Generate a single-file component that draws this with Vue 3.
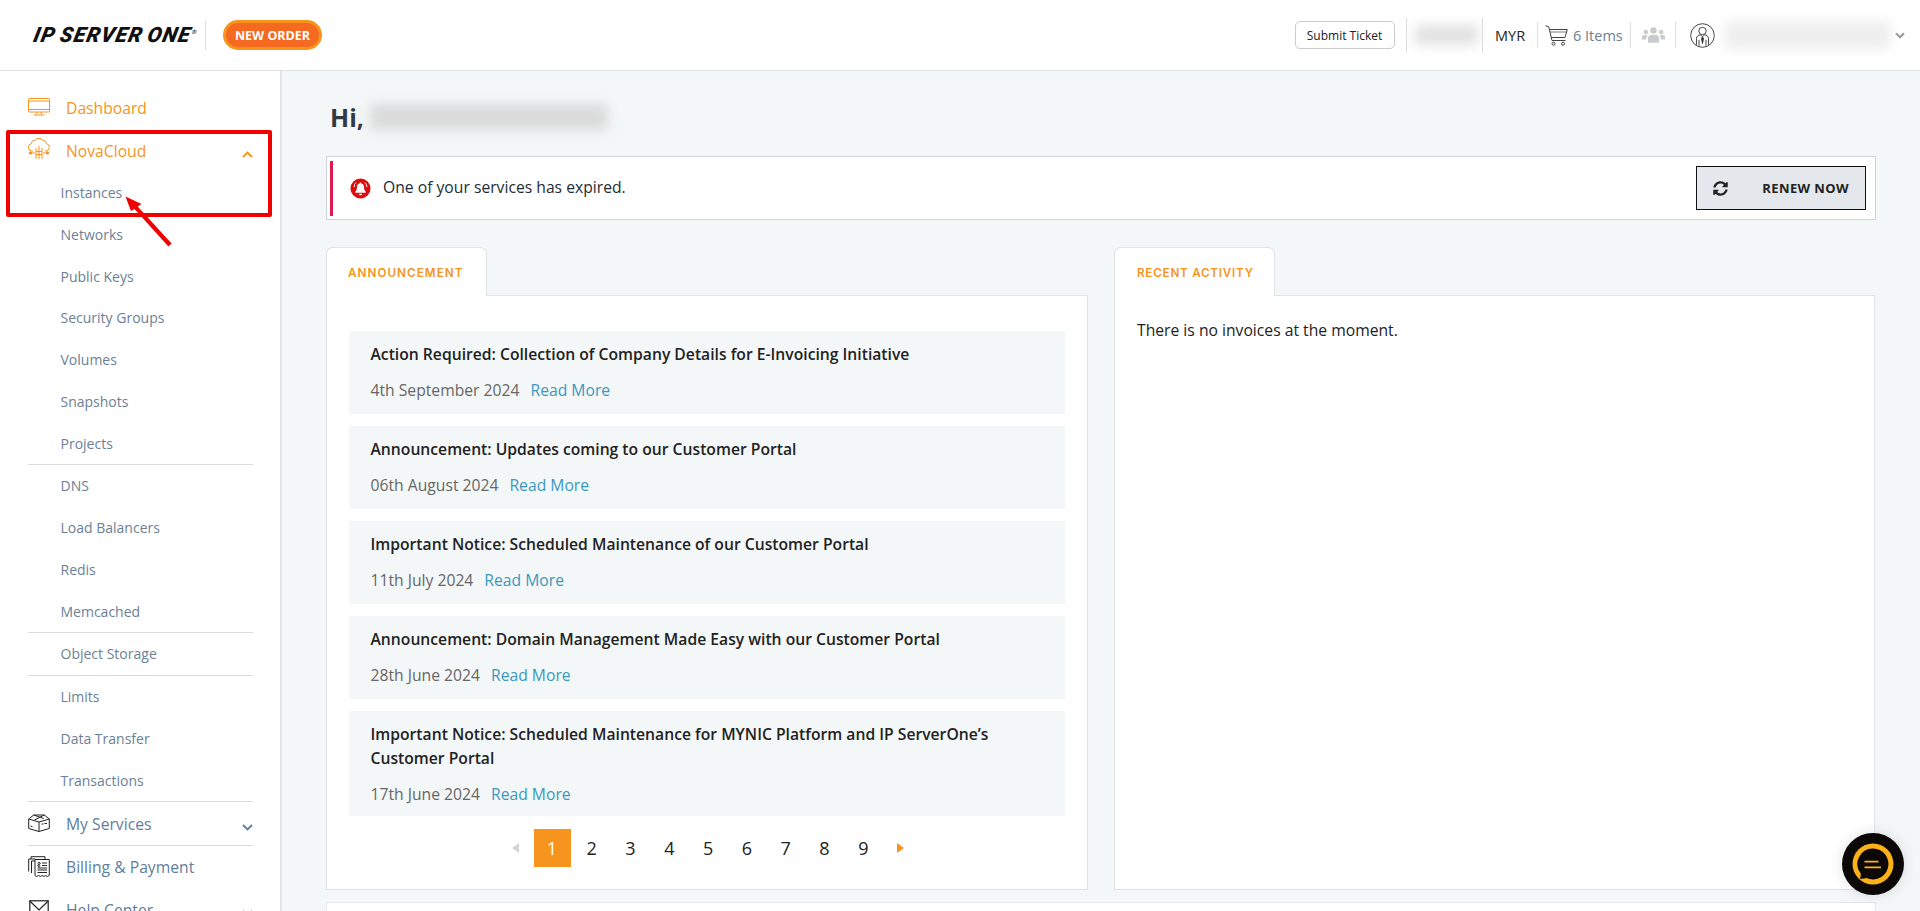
<script setup>
// Datos del menú lateral
const submenu = [
  { nombre: "Instances" },
  { nombre: "Networks" },
  { nombre: "Public Keys" },
  { nombre: "Security Groups" },
  { nombre: "Volumes" },
  { nombre: "Snapshots" },
  { nombre: "Projects" },
  { nombre: "DNS", linea: true },
  { nombre: "Load Balancers" },
  { nombre: "Redis" },
  { nombre: "Memcached" },
  { nombre: "Object Storage", linea: true },
  { nombre: "Limits", linea: true },
  { nombre: "Data Transfer" },
  { nombre: "Transactions" },
];

const anuncios = [
  { titulo: "Action Required: Collection of Company Details for E-Invoicing Initiative", fecha: "4th September 2024" },
  { titulo: "Announcement: Updates coming to our Customer Portal", fecha: "06th August 2024" },
  { titulo: "Important Notice: Scheduled Maintenance of our Customer Portal", fecha: "11th July 2024" },
  { titulo: "Announcement: Domain Management Made Easy with our Customer Portal", fecha: "28th June 2024" },
  { titulo: "Important Notice: Scheduled Maintenance for MYNIC Platform and IP ServerOne’s Customer Portal", fecha: "17th June 2024" },
];

const paginas = [1, 2, 3, 4, 5, 6, 7, 8, 9];
</script>

<template>
  <div class="app">
    <header class="topbar">
      <div class="logo">IP SERVER ONE<sup>®</sup></div>
      <span class="logo-sep"></span>
      <button class="new-order">NEW ORDER</button>

      <div class="top-right">
        <button class="ticket">Submit Ticket</button>
        <span class="sep tall s1"></span>
        <span class="blur blur-credit"></span>
        <span class="sep tall s2"></span>
        <span class="currency">MYR</span>
        <span class="sep s3"></span>
        <svg class="cart" viewBox="0 0 23 21" fill="none" stroke="#444" stroke-width="1">
          <path d="M.5 .8l3.200 .9L7 15.500h13.500" />
          <path d="M4.300 4.500h18l-2.300 8H6.200" />
          <path d="M5 7h16.800" stroke-width=".7" />
          <circle cx="8.500" cy="18.700" r="1.500" />
          <circle cx="18" cy="18.700" r="1.500" />
        </svg>
        <span class="items">6 Items</span>
        <span class="sep s4"></span>
        <svg class="users" viewBox="0 0 23 16" fill="#c9cccf">
          <circle cx="11.500" cy="3.400" r="3.200" />
          <circle cx="3.800" cy="5" r="2.300" />
          <circle cx="19.200" cy="5" r="2.300" />
          <path d="M6 15.800V11c0-2 1.800-3.200 5.500-3.200S17 9 17 11v4.800z" />
          <path d="M0 12.500v-2.700c0-1 1.200-1.800 3.600-1.800.7 0 1.300.1 1.700.2-.7.8-.9 1.800-.9 2.800v1.500z" />
          <path d="M23 12.500v-2.700c0-1-1.200-1.800-3.600-1.800-.7 0-1.300.1-1.700.2.700.8.900 1.800.9 2.800v1.500z" />
        </svg>
        <span class="sep s5"></span>
        <svg class="avatar" viewBox="0 0 25 25" fill="none" stroke="#333" stroke-width=".9">
          <circle cx="12.500" cy="12.500" r="11.800" />
          <circle cx="12.500" cy="8" r="3.700" />
          <path d="M6.500 21.800V15.500c0-2.300 1.800-3.400 4-3.700l2 2 2-2c2.200 .3 4 1.400 4 3.700v6.300" />
          <path d="M9 22.800v-6M16 22.800v-6" />
          <path d="M12.500 14l-1 1.500 1 5 1-5z" fill="#333" />
        </svg>
        <span class="blur blur-user"></span>
        <svg class="caret" viewBox="0 0 10 7" fill="none" stroke="#999" stroke-width="2.200">
          <path d="M1 1.200l4 4 4-4" />
        </svg>
      </div>
    </header>

    <div class="body">
      <aside class="sidebar">
        <a class="menu-item active first">
          <svg class="menu-icon" viewBox="0 0 22 18" fill="none" stroke="#f7941d" stroke-width="1">
            <rect x=".5" y=".5" width="21" height="13.500" rx=".8" />
            <path d="M.5 3h21M.5 11.500h21M9 14l-.5 2.500M13 14l.5 2.500M5.500 17h11" />
          </svg>
          <span>Dashboard</span>
        </a>
        <a class="menu-item active">
          <svg class="menu-icon cloud" viewBox="0 0 22 22" fill="none" stroke="#f7941d" stroke-width="1">
            <path d="M5 13H4a3.700 3.700 0 0 1-.8-7.300 4 4 0 0 1 4-3.600A4.800 4.800 0 0 1 14.800 2.300 3.800 3.800 0 0 1 18.500 5.700 3.700 3.700 0 0 1 18 13h-1" />
            <path d="M8 10v11M14 10v11M11 8v13M8 13.500h6M8 16.500h6" />
            <path d="M1.500 15H7M15 15h5.500" />
            <circle cx="2.500" cy="15" r="1.200" fill="#f7941d" />
            <circle cx="19.500" cy="15" r="1.200" fill="#f7941d" />
          </svg>
          <span>NovaCloud</span>
          <svg class="chevron" viewBox="0 0 11 7" fill="none" stroke="#f7941d" stroke-width="1.800">
            <path d="M1 6l4.500-4.500L10 6" />
          </svg>
        </a>

        <ul class="submenu">
          <li v-for="item in submenu" :key="item.nombre" :class="{ linea: item.linea }">
            {{ item.nombre }}
          </li>
        </ul>

        <a class="menu-item bordered">
          <svg class="menu-icon" viewBox="0 0 22 18" fill="none" stroke="#222" stroke-width="1">
            <path d="M.7 5l10.300 3 10.300-3v9.500L11 17.500.7 14.500z" />
            <path d="M.7 5l5-4h10.600l5 4M11 8v9.500M5.700 1l10 3.500M16.300 1L6.500 6" />
            <path d="M13.500 10h2M16.500 9.500h2.500M2.500 12l2 .7" />
          </svg>
          <span>My Services</span>
          <svg class="chevron" viewBox="0 0 11 7" fill="none" stroke="#5f7d9c" stroke-width="1.800">
            <path d="M1 1l4.500 4.500L10 1" />
          </svg>
        </a>
        <a class="menu-item bordered">
          <svg class="menu-icon tall" viewBox="0 0 22 21" fill="none" stroke="#222" stroke-width="1">
            <path d="M3 3V.7h14V3M.7 15.500V3H7" />
            <path d="M3.500 17V5H7" />
            <path d="M7 3.500h14.300v16l-1.800 1-1.800-1-1.800 1-1.800-1-1.800 1-1.800-1L8.700 20.500 7 19.500z" />
            <path d="M14 7h5M14 9.500h5M9.500 12h9.500M9.500 14h9.500M9.500 16.500h9.500" />
            <path d="M11 6v5.500M9.500 7c.5-.8 3-.8 3 .4s-3 .8-3 2 2.500 1.200 3 .4" stroke-width=".8" />
          </svg>
          <span>Billing &amp; Payment</span>
        </a>
        <a class="menu-item">
          <svg class="menu-icon" viewBox="0 0 22 18" fill="none" stroke="#222" stroke-width="1.200">
            <rect x="1.800" y=".8" width="18.400" height="16.400" />
            <path d="M1.800 1l9.200 9 9.200-9" />
          </svg>
          <span>Help Center</span>
          <svg class="chevron" viewBox="0 0 11 7" fill="none" stroke="#5f7d9c" stroke-width="1.800">
            <path d="M1 1l4.500 4.500L10 1" />
          </svg>
        </a>

        <!-- Marca roja de la captura -->
        <div class="highlight"></div>
        <svg class="arrow" viewBox="0 0 50 53" fill="#f00000">
          <path d="M.5 .5l16 7.500-3.800 2.500 33.900 37-3.200 3-33.900-37.500L6 15z" />
        </svg>
      </aside>

      <main class="main">
        <h1 class="hi">Hi, <span class="blur blur-name"></span></h1>

        <div class="alert">
          <span class="alert-mark"></span>
          <svg class="bell" viewBox="0 0 22 22">
            <circle cx="11" cy="11" r="10.500" fill="#dd0b0b" />
            <path fill="#fff" d="M11 4.800a1 1 0 0 1 1 1c1.800 .5 2.700 2 2.700 4 0 2.500.8 3.700 1.800 4.700v1h-11v-1c1-1 1.800-2.200 1.800-4.700 0-2 .9-3.500 2.700-4a1 1 0 0 1 1-1zM9.300 16.500h3.400a1.700 1.700 0 0 1-3.400 0z" />
            <path fill="none" stroke="#fff" stroke-width="1" d="M6.300 4.800A6.500 6.500 0 0 0 4.300 9.500M15.700 4.800a6.500 6.500 0 0 1 2 4.700" />
          </svg>
          <span class="alert-text">One of your services has expired.</span>
          <button class="renew">
            <svg class="renew-icon" viewBox="0 0 512 512" fill="#222">
              <path d="M370.72 133.28C339.458 104.008 298.888 87.962 255.848 88c-77.458.068-144.328 53.178-162.791 126.85-1.344 5.363-6.122 9.15-11.651 9.15H24.103c-7.498 0-13.194-6.807-11.807-14.176C33.933 94.924 134.813 8 256 8c66.448 0 126.791 26.136 171.315 68.685L463.03 40.97C478.149 25.851 504 36.559 504 57.941V192c0 13.255-10.745 24-24 24H345.941c-21.382 0-32.09-25.851-16.971-40.971l41.75-41.749zM32 296h134.059c21.382 0 32.09 25.851 16.971 40.971l-41.75 41.75c31.262 29.273 71.835 45.319 114.876 45.28 77.418-.07 144.315-53.144 162.787-126.849 1.344-5.363 6.122-9.15 11.651-9.15h57.304c7.498 0 13.194 6.807 11.807 14.176C478.067 417.076 377.187 504 256 504c-66.448 0-126.791-26.136-171.315-68.685L48.97 471.03C33.851 486.149 8 475.441 8 454.059V320c0-13.255 10.745-24 24-24z" />
            </svg>
            <span>RENEW NOW</span>
          </button>
        </div>

        <div class="columns">
          <section class="column">
            <div class="tab">ANNOUNCEMENT</div>
            <div class="panel panel-left">
              <article v-for="a in anuncios" :key="a.titulo" class="anuncio">
                <h3>{{ a.titulo }}</h3>
                <p><span class="fecha">{{ a.fecha }}</span><a class="leer">Read More</a></p>
              </article>
              <nav class="pager">
                <i class="tri prev"></i>
                <span v-for="p in paginas" :key="p" :class="['page', { current: p === 1 }]">{{ p }}</span>
                <i class="tri next"></i>
              </nav>
            </div>
          </section>

          <section class="column">
            <div class="tab recent">RECENT ACTIVITY</div>
            <div class="panel panel-right">There is no invoices at the moment.</div>
          </section>
        </div>

        <div class="next-card"></div>
      </main>
    </div>

    <button class="chat" aria-label="Chat">
      <svg viewBox="0 0 42 42">
        <circle cx="21" cy="21" r="20.500" fill="#fbb117" />
        <path fill="#0b0807" d="M21 5.500a15.500 15.500 0 1 1-6.500 29.600c-2 .6-4.500 .9-7 .5 1-1 1.400-2.800 1.200-5A15.500 15.500 0 0 1 21 5.500z" />
        <path d="M12.500 18.700h14M12.500 24.300H29" stroke="#fbb117" stroke-width="1.800" fill="none" />
      </svg>
    </button>
  </div>
</template>

<style>
html, body {
  margin: 0;
  height: 100%;
  overflow: hidden;
}
</style>

<style scoped>
/* ===== Base ===== */
.app {
  position: relative;
  height: 911px;
  display: flex;
  flex-direction: column;
  overflow: hidden;
  font-family: "Open Sans", "Liberation Sans", sans-serif;
  color: #222;
  background: #f4f7f8;
}

/* ===== Barra superior ===== */
.topbar {
  flex: none;
  height: 70px;
  display: flex;
  align-items: center;
  padding: 0 15px 0 32px;
  background: #fff;
  border-bottom: 1px solid #dcdfe3;
}
.logo {
  width: 161px;
  margin-left: 2px;
  font-family: Roboto, "Liberation Sans", sans-serif;
  font-size: 21px;
  font-weight: 900;
  font-style: italic;
  letter-spacing: 1.250px;
  word-spacing: -2px;
  white-space: nowrap;
  color: #111;
  transform: skewX(-12deg);
}
.logo sup {
  font-size: 6px;
  vertical-align: 8px;
  line-height: 0;
}
.logo-sep {
  width: 1px;
  height: 29px;
  margin-left: 10px;
  background: #ddd;
}
.new-order {
  width: 99px;
  height: 30px;
  margin-left: 17px;
  padding: 0;
  border: 3px solid #f7941d;
  border-radius: 15px;
  background: #f56a20;
  color: #fff;
  font: 700 12.500px "Open Sans", sans-serif;
}
.top-right {
  margin-left: auto;
  display: flex;
  align-items: center;
}
.ticket {
  width: 100px;
  height: 28px;
  padding: 0;
  border: 1px solid #ccc;
  border-radius: 5px;
  background: #fff;
  color: #222;
  font: 400 12px "Open Sans", sans-serif;
}
.sep {
  flex: none;
  width: 1px;
  height: 26px;
  background: #ddd;
}
.sep.tall {
  height: 35px;
}
.s1 { margin-left: 11px; }
.s2 { margin-left: 3px; }
.s3 { margin-left: 11px; }
.s4 { margin-left: 7px; }
.s5 { margin-left: 10px; }
.blur {
  display: inline-block;
  background: #ddd;
  filter: blur(6px);
}
.blur-credit {
  width: 63px;
  height: 20px;
  margin-left: 8px;
  margin-right: 1.500px;
  background: #e2e2e2;
}
.currency {
  width: 31px;
  margin-left: 12px;
  font-size: 14.500px;
  color: #222;
}
.cart {
  width: 23px;
  height: 21px;
  margin-left: 7px;
}
.items {
  width: 50px;
  margin-left: 5px;
  font-size: 14.500px;
  white-space: nowrap;
  color: #6d7f90;
}
.users {
  width: 23px;
  height: 16px;
  margin-left: 11px;
}
.avatar {
  width: 25px;
  height: 25px;
  margin-left: 14px;
}
.blur-user {
  width: 165px;
  height: 28px;
  margin: 0 5px 0 10px;
  background: #eee;
}
.caret {
  width: 10px;
  height: 7px;
}

/* ===== Columna lateral ===== */
.body {
  flex: 1;
  display: flex;
  min-height: 0;
}
.sidebar {
  flex: none;
  position: relative;
  width: 282px;
  padding: 15px 27px 0 28px;
  box-sizing: border-box;
  background: #fff;
  border-right: 2px solid #e3e6e9;
}
.menu-item {
  display: flex;
  align-items: center;
  height: 43px;
  font-size: 15.700px;
  color: #5f7d9c;
}
.menu-item.active {
  color: #f7941d;
}
.menu-item.bordered {
  height: 42.500px;
  border-top: 1px solid #dcdcdc;
}
.menu-icon {
  flex: none;
  width: 22px;
  height: 18px;
  margin-top: -2px;
  margin-right: 16px;
}
.menu-icon.tall {
  height: 21px;
}
.menu-icon.cloud {
  height: 22px;
  margin-top: -3px;
}
.chevron {
  width: 11px;
  height: 7px;
  margin-left: auto;
  margin-top: 8px;
}
.submenu {
  list-style: none;
  margin: 0;
  padding: 0;
}
.submenu li {
  height: 41.750px;
  line-height: 41.750px;
  padding-left: 32.500px;
  font-size: 14px;
  color: #6c7f96;
}
.submenu li.linea {
  border-top: 1px solid #dcdcdc;
}

/* Recuadro y flecha rojos */
.highlight {
  position: absolute;
  left: 6px;
  top: 59px;
  width: 258px;
  height: 79px;
  border: 4px solid #f00000;
  border-radius: 2px;
}
.arrow {
  position: absolute;
  left: 125px;
  top: 125px;
  width: 50px;
  height: 53px;
}

/* ===== Contenido ===== */
.main {
  flex: 1;
  min-width: 0;
  padding: 29px 44px 0 44px;
}
.hi {
  display: flex;
  align-items: center;
  gap: 6px;
  height: 34px;
  margin: 0 0 22px 4px;
  font-size: 25px;
  font-weight: 700;
  color: #2f3a44;
}
.blur-name {
  width: 238px;
  height: 26px;
  background: #dadada;
}
.alert {
  height: 64px;
  box-sizing: border-box;
  display: flex;
  align-items: center;
  padding: 0 9px 0 3px;
  background: #fff;
  border: 1px solid #d0d3d6;
}
.alert-mark {
  width: 3px;
  height: 55px;
  background: #dc1a4e;
}
.bell {
  width: 21px;
  height: 21px;
  margin-left: 17px;
}
.alert-text {
  margin-left: 12px;
  margin-top: -2px;
  font-size: 15.700px;
  color: #222c36;
}
.renew {
  margin-left: auto;
  width: 170px;
  height: 44px;
  box-sizing: border-box;
  display: flex;
  align-items: center;
  justify-content: space-between;
  padding: 0 16px;
  background: #e4e7eb;
  border: 1px solid #111;
  font: 700 13px "Open Sans", sans-serif;
  letter-spacing: .4px;
  color: #222;
}
.renew-icon {
  width: 15px;
  height: 15px;
}
.columns {
  display: grid;
  grid-template-columns: 762px 761px;
  gap: 26px;
  margin-top: 27px;
}
.tab {
  position: relative;
  z-index: 1;
  width: 161px;
  height: 49px;
  box-sizing: border-box;
  margin-bottom: -1px;
  padding-top: 18px;
  padding-left: 21px;
  background: #fff;
  border: 1px solid #dfe3e8;
  border-bottom: 0;
  border-radius: 7px 7px 0 0;
  font: 600 11.700px Inter, sans-serif;
  letter-spacing: 1.050px;
  white-space: nowrap;
  color: #f7941d;
}
.tab.recent {
  padding-left: 22px;
  letter-spacing: .75px;
}
.panel {
  height: 595px;
  box-sizing: border-box;
  background: #fff;
  border: 1px solid #dfe3e8;
}
.panel-left {
  padding: 35px 22px 0;
}
.panel-right {
  padding: 23px 22px;
  font-size: 15.700px;
  color: #222;
}
.anuncio {
  padding: 10.500px 21.500px 11.500px;
  margin-bottom: 12px;
  background: #f4f7f8;
}
.anuncio:last-of-type {
  padding-bottom: 9.500px;
}
.anuncio h3 {
  margin: 0;
  font-size: 15.700px;
  font-weight: 600;
  line-height: 24px;
  color: #222;
}
.anuncio p {
  margin: 11px 0 0;
  line-height: 26px;
  font-size: 15.700px;
}
.fecha {
  color: #666;
}
.leer {
  margin-left: 11px;
  color: #3a98c0;
}
.pager {
  display: flex;
  align-items: center;
  height: 38px;
  margin-top: 13px;
  padding-left: 162.500px;
}
.page {
  width: 38.800px;
  height: 38px;
  line-height: 38px;
  text-align: center;
  font-size: 18px;
  color: #222;
}
.page.current {
  width: 37px;
  margin-right: 1.800px;
  background: #f7941d;
  color: #fff;
}
.tri {
  width: 0;
  height: 0;
  border-top: 5.500px solid transparent;
  border-bottom: 5.500px solid transparent;
}
.tri.prev {
  margin-right: 15px;
  border-right: 7px solid #d4d4d4;
}
.tri.next {
  margin-left: 14px;
  border-left: 7px solid #f7941d;
}
.next-card {
  height: 60px;
  margin-top: 12px;
  background: #fff;
  border: 1px solid #e6e9eb;
}

/* ===== Botón de chat ===== */
.chat {
  position: absolute;
  left: 1842px;
  top: 833px;
  width: 62px;
  height: 62px;
  padding: 10px;
  border: 0;
  border-radius: 50%;
  background: #0b0807;
  box-shadow: 0 0 14px rgba(0, 0, 0, .12);
}
.chat svg {
  display: block;
  width: 42px;
  height: 42px;
}
</style>
